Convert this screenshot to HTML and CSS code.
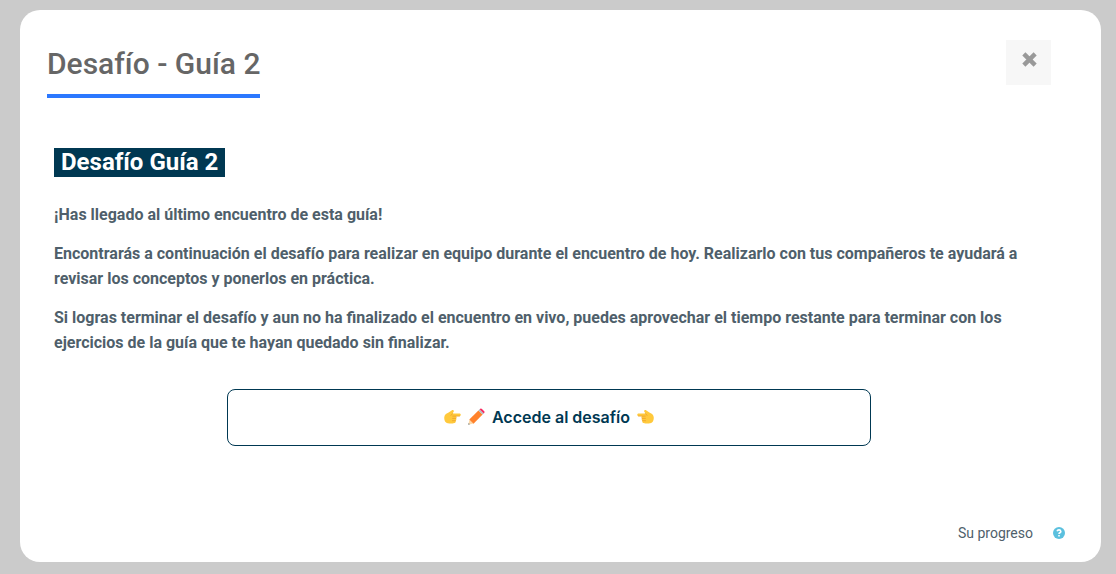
FILE: index.html
```html
<!DOCTYPE html>
<html lang="es">
<head>
<meta charset="utf-8">
<meta name="viewport" content="width=device-width, initial-scale=1">
<title>Desafío - Guía 2</title>
<link rel="stylesheet" href="styles.css">
</head>
<body>
<main class="card">
  <header class="card-header">
    <h1 class="title">Desafío - Guía 2</h1>
    <button class="close" type="button" aria-label="Cerrar">
      <svg width="15" height="15" viewBox="0 0 15 15" aria-hidden="true"><path d="M3.400 3.400l8.200 8.200M11.600 3.400l-8.200 8.200" stroke="currentColor" stroke-width="4.400" stroke-linecap="square" fill="none"/></svg>
    </button>
  </header>
  <section class="content">
    <h2 class="badge">Desafío Guía 2</h2>
    <p class="text">¡Has llegado al último encuentro de esta guía!</p>
    <p class="text">Encontrarás a continuación el desafío para realizar en equipo durante el encuentro de hoy. Realizarlo con tus compañeros te ayudará a revisar los conceptos y ponerlos en práctica.</p>
    <p class="text">Si logras terminar el desafío y aun no ha finalizado el encuentro en vivo, puedes aprovechar el tiempo restante para terminar con los ejercicios de la guía que te hayan quedado sin finalizar.</p>
    <a class="access" href="#">
      <svg class="hand" viewBox="0 0 17 17" aria-hidden="true"><use href="#hand"/></svg>
      <svg class="pencil" viewBox="0 0 17 17" aria-hidden="true">
        <path d="M.3 16.700l1.200-5.200 4 4z" fill="#ffd9a8"/>
        <path d="M.3 16.700l.4-1.600 1.200 1.200z" fill="#546e7a"/>
        <path d="M1.300 11.500L10.400 2.400l4.200 4.200L5.500 15.700z" fill="#ff822b"/>
        <path d="M10.400 2.400L11.600 1.200l4.200 4.200-1.200 1.200z" fill="#b0bec5"/>
        <path d="M11.600 1.200q1.400-1.300 2.600 0L16 3q1.200 1.200-.2 2.400z" fill="#f8295f"/>
      </svg>
      <span>Accede al desafío</span>
      <svg class="hand" viewBox="0 0 17 17" aria-hidden="true"><g transform="matrix(-1 0 0 1 17 0)"><g id="hand">
        <path d="M.3 9C.6 6.500 2.800 5.400 4.600 4.600L7.600 2.400C9 1.300 10.500 2.700 9.500 4L8.500 5.500H15.400C17.200 5.500 17.200 8 15.400 8.100H12C12.900 8.600 12.800 10 11.900 10.400 12.700 11.100 12.400 12.400 11.500 12.700 12.100 13.600 11.500 14.800 10.400 15.100 7.600 15.900 3.800 15.900 1.800 14.200.5 13 .1 11 .3 9z" fill="#ffc93c"/>
        <path d="M8.500 5.600L7 7.400M15.500 8.100H8.700M11.900 10.400H8.600M11.500 12.700H8.500" stroke="#eda02b" stroke-width=".8" fill="none" stroke-linecap="round"/>
      </g></g></svg>
    </a>
  </section>
  <footer class="progress">
    <span>Su progreso</span>
    <a class="help" href="#" aria-label="Ayuda">
      <svg width="12" height="12" viewBox="0 0 12 12" aria-hidden="true"><circle cx="6" cy="6" r="6" fill="#5bc0de"/><path d="M4.100 4.300Q4.500 2.900 6 2.900T7.800 4.400Q7.800 5.200 6.900 5.700 6 6.200 6 7" stroke="#fff" stroke-width="1.600" fill="none"/><path d="M5.200 8h1.600v1.500H5.200z" fill="#fff"/></svg>
    </a>
  </footer>
</main>
</body>
</html>
```
FILE: styles.css
```css
* { box-sizing: border-box; }

body {
  margin: 0;
  padding: 10px 15px 12px 20px;
  min-height: 100vh;
  display: flex;
  background: #cbcbcb;
  font-family: "Roboto", sans-serif;
  color: #4f5f6b;
}

.card {
  flex: 1;
  display: flex;
  flex-direction: column;
  padding: 30px 28px 19px 27px;
  background: #fff;
  border-radius: 20px;
}

.card-header {
  display: flex;
  justify-content: space-between;
  align-items: flex-start;
  padding-right: 22px;
}

.title {
  margin: 0;
  padding-bottom: 6px;
  border-bottom: 4px solid #2b78ff;
  font-size: 30px;
  line-height: 48px;
  font-weight: 500;
  color: #666;
}

.close {
  display: flex;
  justify-content: center;
  width: 45px;
  height: 45px;
  padding: 12px 0 0 2px;
  border: 0;
  background: #f7f7f7;
  color: #999;
}

.content {
  padding: 50px 29px 0 7px;
}

.badge {
  width: fit-content;
  margin: 0 0 25px;
  padding: 0 7px;
  background: #003852;
  font-size: 24px;
  line-height: 29px;
  font-weight: 700;
  color: #fff;
}

.text {
  margin: 0 0 14px;
  font-size: 16px;
  line-height: 25px;
  font-weight: 700;
}

.access {
  display: flex;
  align-items: center;
  justify-content: center;
  gap: 7px;
  width: 65%;
  height: 57px;
  margin: 34px auto 0;
  padding-bottom: 2px;
  border: 1px solid #003852;
  border-radius: 8px;
  font-family: "Inter", sans-serif;
  font-size: 16px;
  font-weight: 600;
  color: #003852;
  text-decoration: none;
}

.hand,
.pencil {
  width: 17px;
  height: 17px;
}

.progress {
  display: flex;
  align-items: center;
  justify-content: flex-end;
  gap: 20px;
  margin-top: auto;
  padding-right: 8px;
  font-size: 14px;
  line-height: 20px;
}

.help {
  display: flex;
}
```
